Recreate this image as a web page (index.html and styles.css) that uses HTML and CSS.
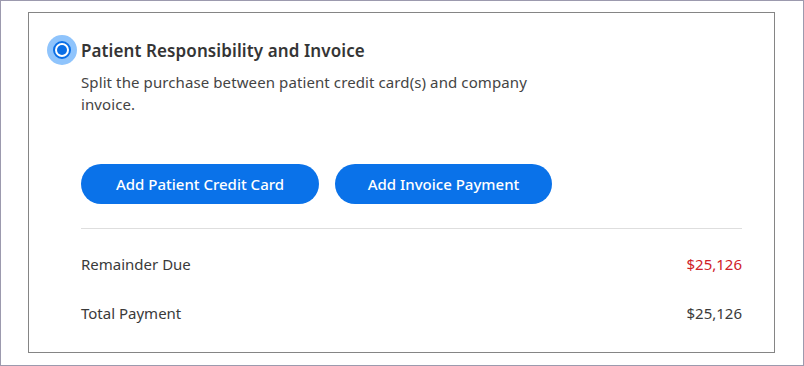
FILE: index.html
```html
<!DOCTYPE html>
<html>
<head>
<meta charset="utf-8">
<link rel="stylesheet" href="styles.css">
</head>
<body>
<div class="frame">
  <section class="card">
    <div class="option">
      <span class="radio"><span class="radio-ring"><span class="radio-dot"></span></span></span>
      <h2 class="title">Patient Responsibility and Invoice</h2>
    </div>
    <div class="content">
      <p class="desc">Split the purchase between patient credit card(s) and company invoice.</p>
      <div class="actions">
        <button class="btn btn-wide">Add Patient Credit Card</button>
        <button class="btn btn-narrow">Add Invoice Payment</button>
      </div>
      <div class="summary">
        <div class="row"><span>Remainder Due</span><span class="due">$25,126</span></div>
        <div class="row"><span>Total Payment</span><span>$25,126</span></div>
      </div>
    </div>
  </section>
</div>
</body>
</html>
```
FILE: styles.css
```css
* { box-sizing: border-box; }
html, body { margin: 0; padding: 0; background: #fff; }
body { font-family: "Noto Sans", "Open Sans", sans-serif; color: #3a3a3a; }
.frame {
  width: 804px;
  height: 366px;
  border: 1px solid #9c9aae;
  padding: 11px 0 0 27px;
}
.card {
  width: 747px;
  height: 341px;
  border: 1px solid #858585;
  padding: 22px 32px 0 18px;
}
.option {
  display: flex;
  align-items: center;
  gap: 4px;
}
.radio {
  width: 30px;
  height: 30px;
  border-radius: 50%;
  background: #8fc4fc;
  display: flex;
  align-items: center;
  justify-content: center;
}
.radio-ring {
  width: 18px;
  height: 18px;
  border-radius: 50%;
  border: 2px solid #0a6fe6;
  background: #fff;
  display: flex;
  align-items: center;
  justify-content: center;
}
.radio-dot {
  width: 10px;
  height: 10px;
  border-radius: 50%;
  background: #0a6fe6;
}
.title {
  margin: 0;
  font-size: 17px;
  font-weight: 600;
  color: #353535;
  letter-spacing: 0.1px;
}
.content { padding-left: 34px; }
.desc {
  margin: 6px 0 0;
  font-size: 15px;
  line-height: 22px;
  color: #444;
  max-width: 470px;
  letter-spacing: 0.1px;
}
.actions {
  display: flex;
  gap: 16px;
  margin-top: 49px;
}
.btn {
  height: 40px;
  border: none;
  border-radius: 20px;
  background: #0a72e9;
  color: #fff;
  font-family: inherit;
  font-size: 15px;
  font-weight: 500;
}
.btn-wide { width: 238px; }
.btn-narrow { width: 217px; }
.summary {
  margin-top: 24px;
  border-top: 1px solid #dedede;
  padding-top: 10px;
}
.row {
  display: flex;
  justify-content: space-between;
  align-items: center;
  height: 49px;
  font-size: 15px;
  color: #3a3a3a;
}
.due { color: #cf2027; }
```
